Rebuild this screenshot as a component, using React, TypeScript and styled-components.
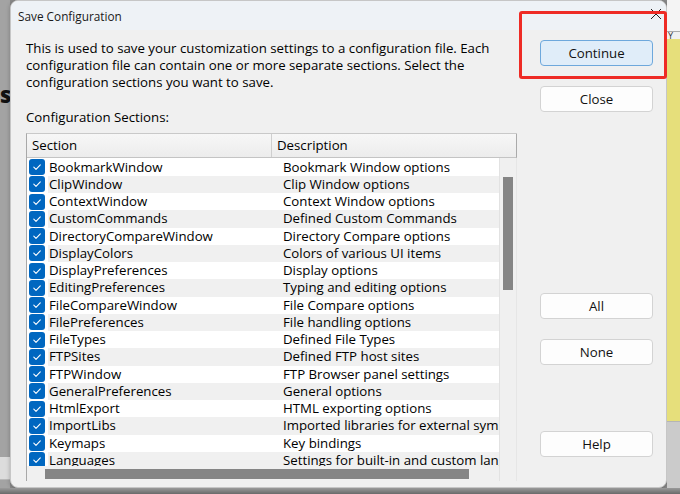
import React from "react";
import styled, { createGlobalStyle } from "styled-components";

const GlobalStyle = createGlobalStyle`
  html, body {
    margin: 0;
    padding: 0;
    overflow: hidden;
  }
  body {
    font-family: "Open Sans", "Noto Sans", sans-serif;
    color: #000;
  }
`;

const Desktop = styled.div`
  position: relative;
  width: 680px;
  height: 494px;
  display: flex;
  flex-direction: column;
  background: #8a8a8a;
  overflow: hidden;
`;

const Stage = styled.div`
  display: flex;
  height: 488px;
`;

const BottomBand = styled.div`
  flex: 1;
  background: linear-gradient(#9a9a9a, #6a6a6a);
`;

const LeftStrip = styled.div`
  width: 10px;
  display: flex;
  flex-direction: column;
  background: #a3a3a3;
  overflow: hidden;
`;

const LeftFill = styled.div`
  flex: 1;
`;

const BehindHeading = styled.div`
  margin-top: 82px;
  margin-left: -14px;
  font-family: "Open Sans", sans-serif;
  font-weight: 800;
  font-size: 22px;
  line-height: 24px;
  color: #111;
  white-space: nowrap;
`;

const LeftLight = styled.div`
  height: 22px;
  background: #dcdcdc;
  border-bottom: 1px solid #b9b9b9;
  margin-bottom: 8px;
`;

const RightStrip = styled.div`
  width: 13px;
  display: flex;
  flex-direction: column;
  background: #cfcfcf;
`;

const RightTop = styled.div`
  height: 31px;
  background: #f4f4f4;
  border-bottom: 1px solid #a9a9a9;
`;

const RightTab = styled.div`
  height: 7px;
  background: #f0f0f0;
  font-size: 9px;
  line-height: 7px;
  color: #333;
  padding-left: 1px;
  overflow: hidden;
`;

const RightYellow = styled.div`
  height: 382px;
  background: #e6df7b;
`;

const RightGray = styled.div`
  flex: 1;
  background: #cbcbcb;
  border-top: 1px solid #b5b5b5;
`;

const Dialog = styled.div`
  flex: 1;
  display: flex;
  flex-direction: column;
  background: #f0f0f0;
  border: 1px solid #c6c6c6;
  border-radius: 8px;
  box-shadow: 0 1px 4px rgba(0, 0, 0, 0.25);
  overflow: hidden;
`;

const TitleBar = styled.div`
  height: 29px;
  flex-shrink: 0;
  display: flex;
  align-items: center;
  justify-content: space-between;
  padding: 0 4px 0 7px;
  background: #eef2f6;
  font-size: 11.8px;
  color: #1a1a1a;
`;

const CloseGlyph = styled.svg`
  width: 12px;
  height: 12px;
  margin-bottom: 4px;
`;

const Body = styled.div`
  flex: 1;
  display: flex;
  padding: 10px 13px 6px 15px;
  min-height: 0;
`;

const MainColumn = styled.div`
  width: 491px;
  display: flex;
  flex-direction: column;
`;

const Intro = styled.p`
  margin: 0;
  font-size: 13.25px;
  line-height: 17.2px;
`;

const SectionLabel = styled.div`
  margin-top: 17px;
  font-size: 13.25px;
  line-height: 17px;
`;

const ListBox = styled.div`
  margin-top: 7px;
  flex: 1;
  display: flex;
  flex-direction: column;
  border-left: 1px solid #a8a8a8;
  border-top: 1px solid #c9c9c9;
  background: #f0f0f0;
  min-height: 0;
`;

const HeaderRow = styled.div`
  height: 23px;
  display: grid;
  grid-template-columns: 245px 1fr;
  background: linear-gradient(#f7f7f7, #ececec);
  border-bottom: 1px solid #c4c4c4;
  border-right: 1px solid #aaaaaa;
`;

const HeaderCell = styled.div<{ $divider?: boolean }>`
  display: flex;
  align-items: center;
  padding-left: 5px;
  font-size: 13.25px;
  border-right: ${(p) => (p.$divider ? "1px solid #cfcfcf" : "none")};
`;

const ListBody = styled.div`
  flex: 1;
  display: flex;
  min-height: 0;
`;

const Viewport = styled.div`
  width: 472px;
  display: flex;
  flex-direction: column;
`;

const Rows = styled.div`
  flex: 1;
  overflow: hidden;
  min-height: 0;
  padding-top: 1px;
  background: #ffffff;
`;

const Row = styled.div<{ $odd: boolean }>`
  height: 17.25px;
  display: grid;
  grid-template-columns: 21px 230px 1fr;
  align-items: center;
  font-size: 13.25px;
  line-height: 17px;
  white-space: nowrap;
  overflow: hidden;
  background: linear-gradient(
    to right,
    #ffffff 21px,
    ${(p) => (p.$odd ? "#f0f0f0" : "#ffffff")} 21px
  );
`;

const CheckCell = styled.div`
  display: flex;
  align-items: center;
  padding-left: 2px;
`;

const CheckBox = styled.span`
  width: 16px;
  height: 16px;
  border-radius: 3px;
  background: #0067c0;
  display: flex;
  align-items: center;
  justify-content: center;
`;

const SectionCell = styled.div`
  padding-left: 1px;
  overflow: hidden;
`;

const DescCell = styled.div`
  padding-left: 5px;
  overflow: hidden;
`;

const HTrack = styled.div`
  height: 15px;
  flex-shrink: 0;
  display: flex;
  align-items: center;
  padding-left: 18px;
  background: #f0f0f0;
`;

const HThumb = styled.div`
  width: 424px;
  height: 10px;
  background: #858585;
`;

const VTrack = styled.div`
  width: 18px;
  background: #f0f0f0;
  border-left: 1px solid #e2e2e2;
  border-right: 1px solid #e6e6e6;
  padding-top: 19px;
  box-sizing: border-box;
`;

const VThumb = styled.div`
  width: 10px;
  height: 113px;
  margin-left: 3px;
  background: #858585;
`;

const ButtonColumn = styled.div`
  margin-left: 23px;
  width: 113px;
  display: flex;
  flex-direction: column;
`;

const Button = styled.button<{ $top: number; $primary?: boolean }>`
  margin-top: ${(p) => p.$top}px;
  height: 26px;
  width: 113px;
  padding: 0;
  border-radius: 4px;
  border: 1px solid ${(p) => (p.$primary ? "#6ea8dc" : "#d3d3d3")};
  background: ${(p) => (p.$primary ? "#e0edf9" : "#fdfdfd")};
  font-family: "Open Sans", sans-serif;
  font-size: 13.25px;
  color: #111;
`;

const Annotation = styled.div`
  position: absolute;
  left: 519px;
  top: 11px;
  width: 142px;
  height: 62px;
  border: 3px solid #ee2b25;
  border-radius: 3px;
  pointer-events: none;
`;

const sections: [string, string][] = [
  ["BookmarkWindow", "Bookmark Window options"],
  ["ClipWindow", "Clip Window options"],
  ["ContextWindow", "Context Window options"],
  ["CustomCommands", "Defined Custom Commands"],
  ["DirectoryCompareWindow", "Directory Compare options"],
  ["DisplayColors", "Colors of various UI items"],
  ["DisplayPreferences", "Display options"],
  ["EditingPreferences", "Typing and editing options"],
  ["FileCompareWindow", "File Compare options"],
  ["FilePreferences", "File handling options"],
  ["FileTypes", "Defined File Types"],
  ["FTPSites", "Defined FTP host sites"],
  ["FTPWindow", "FTP Browser panel settings"],
  ["GeneralPreferences", "General options"],
  ["HtmlExport", "HTML exporting options"],
  ["ImportLibs", "Imported libraries for external symbols"],
  ["Keymaps", "Key bindings"],
  ["Languages", "Settings for built-in and custom languages"],
  ["Projects", "Project options"],
];

const Check = () => (
  <svg width="10" height="10" viewBox="0 0 10 10">
    <path
      d="M1.8 5.2 L4 7.3 L8.3 2.8"
      fill="none"
      stroke="#fff"
      strokeWidth="1.1"
      strokeLinecap="round"
      strokeLinejoin="round"
    />
  </svg>
);

const App: React.FC = () => {
  return (
    <>
      <GlobalStyle />
      <Desktop>
        <Stage>
          <LeftStrip>
            <BehindHeading>os</BehindHeading>
            <LeftFill />
            <LeftLight />
          </LeftStrip>
          <Dialog>
            <TitleBar>
              <span>Save Configuration</span>
              <CloseGlyph viewBox="0 0 12 12">
                <path d="M1 1 L11 11 M11 1 L1 11" stroke="#222" strokeWidth="1" />
              </CloseGlyph>
            </TitleBar>
            <Body>
              <MainColumn>
                <Intro>
                  This is used to save your customization settings to a
                  configuration file. Each
                  <br />
                  configuration file can contain one or more separate sections.
                  Select the
                  <br />
                  configuration sections you want to save.
                </Intro>
                <SectionLabel>Configuration Sections:</SectionLabel>
                <ListBox>
                  <HeaderRow>
                    <HeaderCell $divider>Section</HeaderCell>
                    <HeaderCell>Description</HeaderCell>
                  </HeaderRow>
                  <ListBody>
                    <Viewport>
                      <Rows>
                        {sections.map(([name, desc], i) => (
                          <Row key={name} $odd={i % 2 === 1}>
                            <CheckCell>
                              <CheckBox>
                                <Check />
                              </CheckBox>
                            </CheckCell>
                            <SectionCell>{name}</SectionCell>
                            <DescCell>{desc}</DescCell>
                          </Row>
                        ))}
                      </Rows>
                      <HTrack>
                        <HThumb />
                      </HTrack>
                    </Viewport>
                    <VTrack>
                      <VThumb />
                    </VTrack>
                  </ListBody>
                </ListBox>
              </MainColumn>
              <ButtonColumn>
                <Button $top={0} $primary>
                  Continue
                </Button>
                <Button $top={20}>Close</Button>
                <Button $top={181}>All</Button>
                <Button $top={20}>None</Button>
                <Button $top={66}>Help</Button>
              </ButtonColumn>
            </Body>
          </Dialog>
          <RightStrip>
            <RightTop />
            <RightTab>Y</RightTab>
            <RightYellow />
            <RightGray />
          </RightStrip>
        </Stage>
        <BottomBand />
        <Annotation />
      </Desktop>
    </>
  );
};

export default App;
